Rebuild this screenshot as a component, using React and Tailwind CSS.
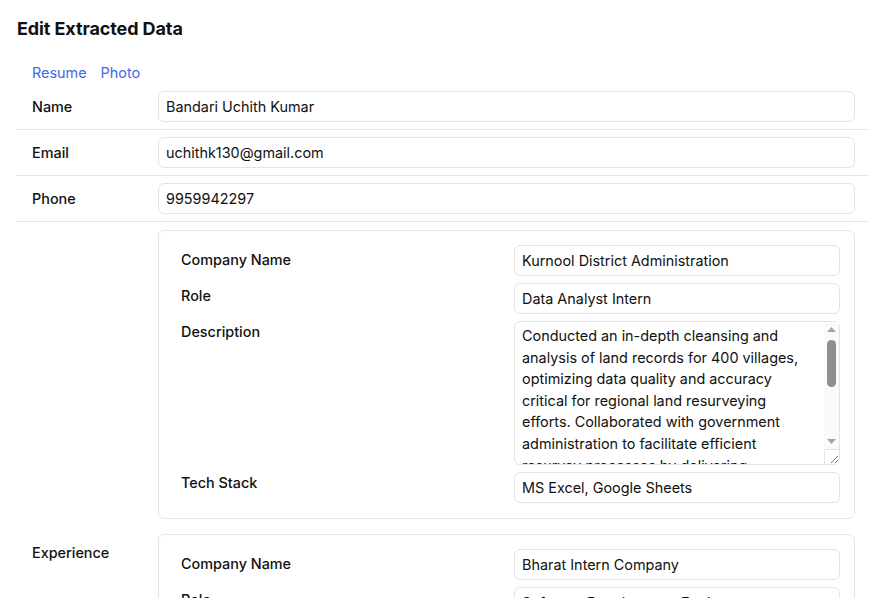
import React from 'react';

const desc =
  'Conducted an in-depth cleansing and analysis of land records for 400 villages, optimizing data quality and accuracy critical for regional land resurveying efforts. Collaborated with government administration to facilitate efficient resurvey processes by delivering comprehensive, cleaned datasets for field teams.';

const Field = ({ value }) => (
  <input
    readOnly
    value={value}
    className="w-full h-[31px] px-[7px] border border-[#e3e3e3] rounded-[6px] text-[14.4px] text-[#111] bg-white outline-none"
  />
);

const TopRow = ({ label, value }) => (
  <div className="flex items-center pl-4 pr-[14px] py-[7px] border-b border-[#e5e5e5]">
    <div className="w-[126px] shrink-0 font-medium text-[14.4px] text-[#111]">{label}</div>
    <Field value={value} />
  </div>
);

const CardRow = ({ label, pad, children }) => (
  <div className="flex items-start">
    <div className={`w-[333px] shrink-0 font-medium text-[14.4px] leading-5 text-[#111] ${pad}`}>{label}</div>
    <div className="flex-1">{children}</div>
  </div>
);

// drawn scrollbar: the screenshot browser hides native ones
const FakeScrollbar = () => (
  <div className="absolute right-[1px] top-[1px] bottom-[1px] w-[15px] flex flex-col bg-[#fafafa]">
    <div className="h-[15px] flex items-center justify-center">
      <svg width="9" height="5" viewBox="0 0 9 5"><path d="M4.5 0 L9 5 L0 5 Z" fill="#a3a3a3" /></svg>
    </div>
    <div className="flex-1 px-[3px] pt-[3px]">
      <div className="h-[47px] rounded-full bg-[#8f8f8f]" />
    </div>
    <div className="h-[15px] flex items-center justify-center">
      <svg width="9" height="5" viewBox="0 0 9 5"><path d="M0 0 L9 0 L4.5 5 Z" fill="#a3a3a3" /></svg>
    </div>
    <div className="h-[15px] bg-white border-t border-l border-[#e3e3e3] rounded-br-[5px] flex items-end justify-end">
      <svg width="10" height="10" viewBox="0 0 10 10">
        <path d="M2 9 L9 2 M6 9 L9 6" stroke="#777" strokeWidth="1" />
      </svg>
    </div>
  </div>
);

const ExpCard = ({ company, role, description, stack }) => (
  <div className="border border-[#e5e5e5] rounded-[6px] pl-[22px] pr-[14px] pt-[14px] pb-[15px] flex flex-col gap-[7px]">
    <CardRow label="Company Name" pad="pt-[5px]">
      <Field value={company} />
    </CardRow>
    <CardRow label="Role" pad="pt-[3px]">
      <Field value={role} />
    </CardRow>
    <CardRow label="Description" pad="pt-[1px]">
      <div className="relative">
        <textarea
          readOnly
          value={description}
          className="block w-full h-[144px] pl-[7px] pr-[22px] py-[3px] border border-[#e3e3e3] rounded-[6px] text-[14.4px] leading-[21.6px] text-[#111] bg-white outline-none overflow-hidden resize-none"
        />
        <FakeScrollbar />
      </div>
    </CardRow>
    <CardRow label="Tech Stack" pad="pt-[1px]">
      <Field value={stack} />
    </CardRow>
  </div>
);

export default function App() {
  return (
    <div className="min-h-screen bg-white pl-4 font-['Inter',sans-serif] text-[#111]">
      <h1 className="pt-[18px] text-[18px] leading-[22px] font-bold tracking-[-0.1px] pl-[1px]">Edit Extracted Data</h1>

      <div className="flex gap-[14px] pl-4 pt-[23px] text-[14.4px] leading-5 text-[#4169e8]">
        <span>Resume</span>
        <span>Photo</span>
      </div>

      <div className="mt-[1px]">
        <TopRow label="Name" value="Bandari Uchith Kumar" />
        <TopRow label="Email" value="uchithk130@gmail.com" />
        <TopRow label="Phone" value="9959942297" />
      </div>

      <div className="pr-[14px] pt-2 flex flex-col gap-[15px]">
        <div className="flex">
          <div className="w-[142px] shrink-0" />
          <div className="flex-1">
            <ExpCard
              company="Kurnool District Administration"
              role="Data Analyst Intern"
              description={desc}
              stack="MS Excel, Google Sheets"
            />
          </div>
        </div>
        <div className="flex">
          <div className="w-[142px] shrink-0 pl-4 pt-[9px] font-medium text-[14.4px] leading-5">Experience</div>
          <div className="flex-1">
            <ExpCard
              company="Bharat Intern Company"
              role="Software Development Engineer"
              description="Developed and maintained web application features, collaborating with the team to deliver responsive interfaces and reliable back-end services."
              stack="React, Node.js, MongoDB"
            />
          </div>
        </div>
      </div>
    </div>
  );
}
